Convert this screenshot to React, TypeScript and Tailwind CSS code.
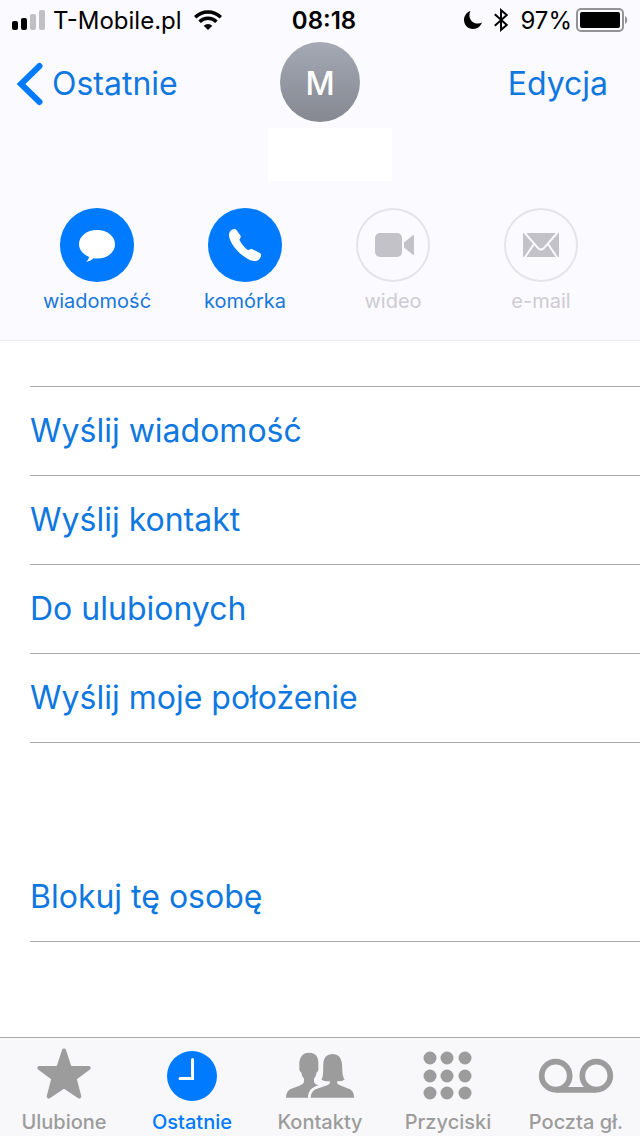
import React from 'react';

interface ContactAction {
  label: string;
  icon: React.ReactNode;
  enabled: boolean;
}

interface TabItem {
  label: string;
  icon: React.ReactNode;
}

const actions: ContactAction[] = [
  {
    label: 'wiadomość',
    enabled: true,
    icon: (
      <path d="M37 22c10 0 18 6 18 14.300s-8 14.300-18 14.300c-1.200 0-2.400 0-3.500-.3-2 2-4.500 3.300-7.300 3.400 1.500-1.400 2.600-2.900 2.900-4.800C23.200 46.500 19 42 19 36.300 19 28 27 22 37 22z" />
    ),
  },
  {
    label: 'komórka',
    enabled: true,
    icon: (
      <path d="M22 23.500c1.200-1.600 2.600-2.400 4.300-2.500 1 0 1.800.3 2.400 1.200l3.700 5.300c.6 1 .4 1.700-.1 2.500-.9 1.200-.9 2-.3 3 1.800 3.200 4 6 7 8.400 1 .8 1.900.7 2.800.1.900-.6 1.700-.7 2.700-.2l6.900 3.500c1.400.7 1.900 1.700 1.600 3.200-.6 2.600-2.500 4.600-5.200 5-2.800.3-5.600-.6-8.300-2.200-6.300-3.700-11.500-8.600-15.300-14.800-2-3.300-3.200-6.300-3.200-9.200 0-1.200.3-2.300 1-3.300z" />
    ),
  },
  {
    label: 'wideo',
    enabled: false,
    icon: (
      <>
        <rect x="19" y="25" width="27" height="24" rx="5" />
        <path d="M48 34.500l8-6.500c1-.8 2-1 2-1v20s-1-.2-2-1l-8-6.500z" />
      </>
    ),
  },
  {
    label: 'e-mail',
    enabled: false,
    icon: (
      <>
        <rect x="19" y="25" width="36" height="24" />
        <path
          d="M20 24l14.300 16.300q2.700 2.600 5.400 0L54 24M30 36L20.500 50M44 36l9.500 14"
          fill="none"
          stroke="#fbfaff"
          strokeWidth="2"
        />
      </>
    ),
  },
];

const links = ['Wyślij wiadomość', 'Wyślij kontakt', 'Do ulubionych', 'Wyślij moje położenie'];

const ACTIVE_TAB = 'Ostatnie';

const tabs: TabItem[] = [
  {
    label: 'Ulubione',
    icon: (
      <path
        d="M40 3.500L45.800 21H64.700L50.600 31.500L55.300 49.500L40 39.400L24.700 49.500L29.400 31.500L15.300 21H34.200z"
        stroke="currentColor"
        strokeWidth="4"
        strokeLinejoin="round"
      />
    ),
  },
  {
    label: 'Ostatnie',
    icon: (
      <>
        <circle cx="40" cy="29" r="25" />
        <path d="M40.500 12.500v19H28" fill="none" stroke="#fff" strokeWidth="3" strokeLinecap="round" strokeLinejoin="miter" />
      </>
    ),
  },
  {
    label: 'Kontakty',
    icon: (
      <>
        <path d="M6 50.700c.2-5 2-7.700 6-9.200l8-3.100c2.500-1 4-2.200 4-4.400v-2.500c-1.800-1.800-2.200-3.600-2.600-6-1.700-.8-2.400-3-2-5.500-.8-8 2-14.300 9.600-14.300s10.200 5 9.300 14.300c.5 2.500-.2 4.700-1.700 5.500-.4 2.400-1 4.200-2.600 6v2.500c0 2.200 1 3.200 4.500 4.200-7 2-10.500 6-10.500 12.500z" />
        <path d="M30.700 50.700c.3-4.800 2.300-7.700 6.300-9l9.500-3.200c2.500-.9 3.500-2 3.500-3.800v-.4c-3.300.1-6.300-.3-8.500-1.600 2.200-4.500 1.500-10 1.800-15.700.3-6.500 3.700-10 9.200-10s8.900 3.500 9.500 10c.5 6-.2 11 2.600 15.700-2 1.200-4.800 1.600-7.600 1.600v.4c0 1.800 1 2.900 3.500 3.800l7.500 3c4.200 1.400 6 4.200 6.200 9.200z" />
      </>
    ),
  },
  {
    label: 'Przyciski',
    icon: (
      <>
        {[11, 29, 46].map((cy) =>
          [22, 39, 57].map((cx) => <circle key={`${cx}-${cy}`} cx={cx} cy={cy} r="6.500" />)
        )}
      </>
    ),
  },
  {
    label: 'Poczta gł.',
    icon: (
      <g fill="none" stroke="currentColor" strokeWidth="5.700">
        <circle cx="19.700" cy="28.700" r="14" />
        <circle cx="60.300" cy="28.700" r="14" />
        <path d="M19.700 42.800h40.600" />
      </g>
    ),
  },
];

function StatusBar() {
  return (
    <div className="grid h-10 grid-cols-[1fr_auto_1fr] items-center px-3 text-[24px] leading-9 text-black">
      <div className="flex items-center">
        <svg className="mr-2 h-5 w-[33px]" viewBox="0 0 33 20" aria-hidden="true">
          <rect x="0" y="11" width="6" height="9" rx="2" />
          <rect x="9" y="8" width="6" height="12" rx="2" />
          <rect x="18" y="4" width="6" height="16" rx="2" fill="#c0c0c3" />
          <rect x="27" y="0" width="6" height="20" rx="2" fill="#c0c0c3" />
        </svg>
        <span className="pt-0.5">T-Mobile.pl</span>
        <svg className="ml-3 h-5 w-7" viewBox="0 0 28 20" fill="none" stroke="#000" strokeWidth="3.500" aria-hidden="true">
          <path d="M1.200 7.200a18.300 18.300 0 0 1 25.600 0" />
          <path d="M5.600 11.700a12 12 0 0 1 16.800 0" />
          <path d="M14 20l-4.300-4.200a6.200 6.200 0 0 1 8.600 0z" fill="#000" stroke="none" />
        </svg>
      </div>
      <span className="pl-2 pt-0.5 font-semibold">08:18</span>
      <div className="flex items-center justify-end">
        <svg className="mr-3 h-5 w-[18px]" viewBox="0 0 18 20" aria-hidden="true">
          <path d="M6.500 1C2.600 2.300 0 5.800 0 10c0 5 4 9 9 9 4.200 0 7.700-2.600 9-6.400-1.200.6-2.500.9-4 .9-5 0-8.600-3.600-8.600-8.300 0-1.500.4-3 1.100-4.200z" />
        </svg>
        <svg className="mr-3 h-6 w-[14px]" viewBox="0 0 14 24" fill="none" stroke="#000" strokeWidth="2" aria-hidden="true">
          <path d="M.8 6.300l12 10.700-5.800 4.800V2.200L12.800 7 .8 17.700" />
        </svg>
        <span className="mr-1 pt-0.5">97%</span>
        <svg className="h-6 w-[52px]" viewBox="0 0 52 24" aria-hidden="true">
          <rect x="1" y="1" width="46" height="22" rx="4" fill="none" stroke="#949497" strokeWidth="2" />
          <rect x="4" y="4" width="40" height="16" rx="2" />
          <path d="M49 8c3 1.500 3 6.500 0 8z" fill="#949497" />
        </svg>
      </div>
    </div>
  );
}

function ActionButton({ label, icon, enabled }: ContactAction) {
  return (
    <button
      type="button"
      disabled={!enabled}
      className={`flex flex-col items-center ${enabled ? 'text-[#1877d8]' : 'text-[#cdccd2]'}`}
    >
      <span
        className={`block size-[74px] rounded-full ${
          enabled ? 'bg-[#007aff] text-white' : 'text-[#c3c2c8] shadow-[inset_0_0_0_2px_#e5e4ea]'
        }`}
      >
        <svg viewBox="0 0 74 74" className="size-full" fill="currentColor" aria-hidden="true">
          {icon}
        </svg>
      </span>
      <span className="mt-[5px] text-[20px] leading-7">{label}</span>
    </button>
  );
}

function LinkRow({ label }: { label: string }) {
  return (
    <li className="border-b border-[#a9a9ac]">
      <button type="button" className="block h-[88px] w-full text-left text-[32px] text-[#0f78e0]">
        {label}
      </button>
    </li>
  );
}

export default function App() {
  return (
    <div className="flex min-h-screen flex-col bg-white font-[Inter,'Liberation_Sans',sans-serif]">
      <header className="border-b border-[#ebeaf0] bg-[#fbfaff] pb-[25px]">
        <StatusBar />

        <div className="mt-[2px] grid grid-cols-[1fr_auto_1fr] items-center pl-4 pr-8 text-[32px] text-[#0f78e0]">
          <button type="button" className="flex items-center gap-2 justify-self-start pt-1">
            <svg className="h-11 w-7" viewBox="0 0 28 44" fill="none" aria-hidden="true">
              <path d="M23.500 4L5 22l18.500 18" stroke="#007aff" strokeWidth="6" strokeLinecap="round" />
            </svg>
            Ostatnie
          </button>
          <div className="ml-4 flex size-20 items-center justify-center rounded-full bg-linear-to-b from-[#a5a9b4] to-[#858891] pt-1 font-medium text-white">
            M
          </div>
          <button type="button" className="justify-self-end pt-1">
            Edycja
          </button>
        </div>

        {/* Contact name, left blank */}
        <div className="flex justify-center pl-5 pt-[6px]">
          <div className="h-[53px] w-[124px] bg-white" />
        </div>

        <div className="mt-[27px] grid grid-cols-4 pl-[23px] pr-[25px]">
          {actions.map((action) => (
            <ActionButton key={action.label} {...action} />
          ))}
        </div>
      </header>

      <main className="flex-1 pl-[30px]">
        <ul className="mt-[45px] border-t border-[#a9a9ac]">
          {links.map((label) => (
            <LinkRow key={label} label={label} />
          ))}
        </ul>
        <ul className="mt-[110px]">
          <LinkRow label="Blokuj tę osobę" />
        </ul>
      </main>

      <nav className="sticky bottom-0 grid grid-cols-5 border-t border-[#a9a9ac] bg-[#f8f8fa]">
        {tabs.map(({ label, icon }) => {
          const active = label === ACTIVE_TAB;
          return (
            <a
              key={label}
              href="#"
              aria-current={active ? 'page' : undefined}
              className={`flex flex-col items-center pt-[9px] text-[20px] font-medium leading-7 ${
                active ? 'text-[#007aff]' : 'text-[#9c9c9c]'
              }`}
            >
              <svg viewBox="0 0 80 56" className="h-14 w-20" fill="currentColor" aria-hidden="true">
                {icon}
              </svg>
              <span className="mt-[5px] whitespace-nowrap">{label}</span>
            </a>
          );
        })}
      </nav>
    </div>
  );
}
